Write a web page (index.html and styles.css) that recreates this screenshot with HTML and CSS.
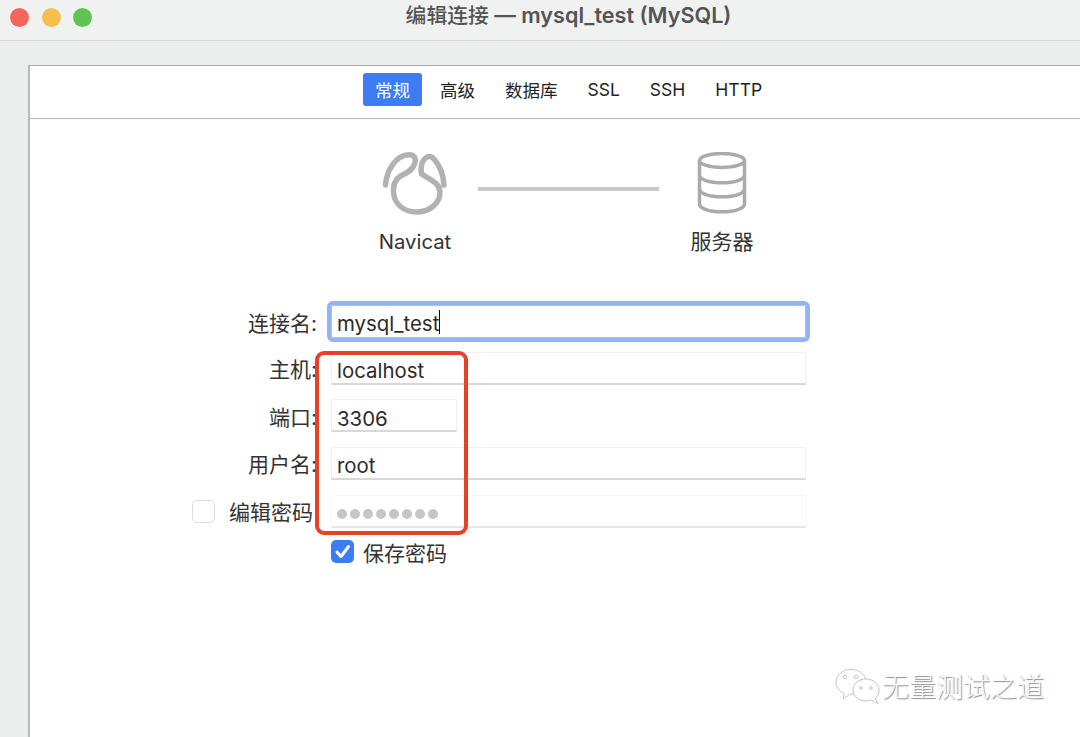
FILE: index.html
```html
<!DOCTYPE html>
<html lang="zh-CN">
<head>
<meta charset="utf-8">
<title>编辑连接 — mysql_test (MySQL)</title>
<link rel="stylesheet" href="styles.css">
</head>
<body>
<div class="window">
  <header class="titlebar">
    <div class="lights">
      <span class="light red"></span>
      <span class="light yellow"></span>
      <span class="light green"></span>
    </div>
    <div class="title"><span class="title-cjk">编辑连接</span> — mysql_test (MySQL)</div>
  </header>
  <main class="panel">
    <nav class="tabs">
      <span class="tab active">常规</span>
      <span class="tab">高级</span>
      <span class="tab">数据库</span>
      <span class="tab">SSL</span>
      <span class="tab">SSH</span>
      <span class="tab">HTTP</span>
    </nav>
    <section class="diagram">
      <div class="node">
        <svg class="node-icon" width="66" height="64" viewBox="0 0 66 64" fill="none" stroke="#b2b2b2" stroke-width="5.500" stroke-linecap="round" stroke-linejoin="round">
          <path d="M3.500 33C4.500 18 14 3.500 26.500 2.800C32 2.500 34 6 33 10.500C32 16 28 19.500 18.500 24C14 27 11 33 11.500 40C12 52 22 60 34.500 60C47 60 58 52 58 40C58 31 47 27 39.500 22C38.500 15 40 9 43.500 6C46 3.800 49.500 4 52 7C58 14 61.500 24 62 33"/>
        </svg>
        <span class="node-label">Navicat</span>
      </div>
      <div class="link"></div>
      <div class="node">
        <svg class="node-icon" width="50" height="64" viewBox="0 0 50 64" fill="none" stroke="#aaaaaa" stroke-width="3.500" stroke-linecap="round" stroke-linejoin="round">
          <ellipse cx="25" cy="8.500" rx="22.500" ry="7"/>
          <path d="M2.500 8.500V52C2.500 56.500 12 59.800 25 59.800S47.500 56.500 47.500 52V8.500"/>
          <path d="M2.500 23C2.500 27.500 12 30.800 25 30.800S47.500 27.500 47.500 23"/>
          <path d="M2.500 37C2.500 41.500 12 44.800 25 44.800S47.500 41.500 47.500 37"/>
        </svg>
        <span class="node-label node-label-cjk">服务器</span>
      </div>
    </section>
    <form class="form">
      <div class="row row-name">
        <label class="label">连接名:</label>
        <div class="field focused"><span>mysql_test</span><i class="caret"></i></div>
      </div>
      <div class="row">
        <label class="label">主机:</label>
        <div class="field"><span>localhost</span></div>
      </div>
      <div class="row">
        <label class="label">端口:</label>
        <div class="field short"><span>3306</span></div>
      </div>
      <div class="row">
        <label class="label">用户名:</label>
        <div class="field"><span>root</span></div>
      </div>
      <div class="row">
        <div class="label label-check">
          <span class="check"></span>
          <span class="check-text">编辑密码</span>
        </div>
        <div class="field disabled">
          <span class="dots"><i></i><i></i><i></i><i></i><i></i><i></i><i></i><i></i></span>
        </div>
      </div>
      <div class="row row-save">
        <span class="check on">
          <svg width="23" height="23" viewBox="0 0 23 23" fill="none" stroke="#fff" stroke-width="3" stroke-linecap="round" stroke-linejoin="round"><path d="M6 12l4 4.500 7.500-10"/></svg>
        </span>
        <span class="save-text">保存密码</span>
      </div>
    </form>
  </main>
  <div class="highlight"></div>
  <div class="watermark">
    <svg width="46" height="40" viewBox="0 0 46 40" fill="none" stroke="#c4c4c4" stroke-width="1">
      <path d="M19 26C17.500 26.300 16 26.500 14.500 26.500L8 31L9.500 25.500C4 23 1 19 1 14.500C1 7 8 1.500 16 1.500C23 1.500 29 5.500 31 11"/>
      <path d="M44 22C44 15.500 38 11 31 11C24 11 18 15.500 18 22C18 28.500 24 33 31 33C33 33 35 32.600 36.500 32L43 36L40.500 30.500C43 28 44 25 44 22Z"/>
      <circle cx="10" cy="9" r="1.800"/><circle cx="21" cy="9" r="1.800"/>
      <circle cx="26" cy="20" r="1.300"/><circle cx="36" cy="20" r="1.300"/>
    </svg>
    <span class="watermark-text">无量测试之道</span>
  </div>
</div>
</body>
</html>
```
FILE: styles.css
```css
* { box-sizing: border-box; }
html, body { margin: 0; height: 100%; overflow: hidden; }
body {
  font-family: "Inter", "Noto Sans CJK SC", sans-serif;
  color: #2b2b2b;
  background: #eceeee;
}
.window {
  position: relative;
  display: flex;
  flex-direction: column;
  height: 737px;
}
.titlebar {
  position: relative;
  flex: none;
  height: 41px;
  display: flex;
  align-items: center;
  justify-content: center;
  padding: 0 0 12px 57px;
  background: #f0f2f2;
  border-bottom: 1px solid #d6d8d8;
}
.lights {
  position: absolute;
  left: 10px;
  top: 8px;
  display: flex;
  gap: 12.5px;
}
.light { width: 19px; height: 19px; border-radius: 50%; }
.red { background: #f2665c; }
.yellow { background: #f6bd4f; }
.green { background: #5fc454; }
.title {
  font-size: 21.6px;
  font-weight: 600;
  color: #545454;
  white-space: nowrap;
}
.title-cjk {
  font-size: 20.8px;
  font-weight: 500;
}
.panel {
  flex: 1;
  margin: 24px 0 0 28px;
  background: #fff;
  border-top: 1px solid #a8a8a8;
  border-left: 2px solid #b8baba;
}
.tabs {
  display: flex;
  align-items: flex-start;
  gap: 6px;
  height: 53px;
  padding: 7px 0 0 333px;
  border-bottom: 1px solid #b4b4b4;
  font-size: 17.5px;
  color: #222;
}
.tab {
  display: flex;
  align-items: center;
  height: 33px;
  padding: 0 12px;
  border-radius: 3px;
  white-space: nowrap;
}
.tab.active { background: #3d7cf2; color: #fff; }
.diagram {
  display: flex;
  align-items: flex-start;
  margin: 33px 0 0 335px;
}
.node {
  display: flex;
  flex-direction: column;
  align-items: center;
  width: 100px;
}
.node-icon { display: block; }
.node-label {
  margin-top: 12px;
  font-size: 20.3px;
  line-height: 28px;
  color: #333;
}
.node-label-cjk { font-size: 21px; }
.link {
  width: 181px;
  height: 4px;
  margin: 35px 13px 0;
  background: #c9c9c9;
}
.form {
  display: flex;
  flex-direction: column;
  gap: 14.67px;
  margin: 49px 0 0 162px;
}
.row {
  display: flex;
  align-items: center;
  gap: 14px;
  height: 33px;
  font-size: 21px;
}
.label {
  width: 125px;
  text-align: right;
  color: #333;
  white-space: nowrap;
}
.label-check {
  display: flex;
  align-items: center;
  justify-content: space-between;
  padding-right: 4px;
}
.field {
  display: flex;
  align-items: center;
  width: 475px;
  height: 33px;
  padding: 0 5px;
  background: #fff;
  border: 1px solid #f0f0f0;
  border-bottom: 2px solid #d8d8d8;
  color: #2b2b2b;
  font-size: 20.4px;
}
.field span { position: relative; top: 3px; }
.field.short { width: 126px; }
.field.focused {
  height: 33px;
  border: 1px solid #aac0f0;
  outline: 4px solid #94b3f2;
  border-radius: 2px;
}
.field.focused span { top: 2px; }
.field.disabled { border-color: #f6f6f6; border-bottom-color: #e6e6e6; }
.caret {
  display: block;
  width: 1px;
  height: 24px;
  background: #111;
}
.dots { display: flex; gap: 3px; }
.dots i {
  display: block;
  width: 10px;
  height: 10px;
  border-radius: 50%;
  background: #c6c6c6;
}
.check {
  display: block;
  flex: none;
  width: 23px;
  height: 23px;
  border-radius: 5px;
  background: #fff;
  border: 1px solid #dcdcdc;
}
.check.on {
  border: 0;
  background: #3d7cf2;
}
.check.on svg { display: block; }
.row-name { margin-bottom: -1px; }
.row-save {
  gap: 9px;
  margin: -7px 0 0 139px;
}
.save-text { color: #333; }
.highlight {
  position: absolute;
  left: 315px;
  top: 351px;
  width: 153px;
  height: 184px;
  border: 4.5px solid #e8412a;
  border-radius: 9px;
}
.watermark {
  position: absolute;
  left: 835px;
  top: 668px;
  display: flex;
  align-items: center;
  gap: 1px;
}
.watermark-text {
  font-size: 27px;
  font-weight: 300;
  line-height: 40px;
  color: #f8f8f8;
  text-shadow: 1px 1px 1px #8c8c8c;
  white-space: nowrap;
}
```
